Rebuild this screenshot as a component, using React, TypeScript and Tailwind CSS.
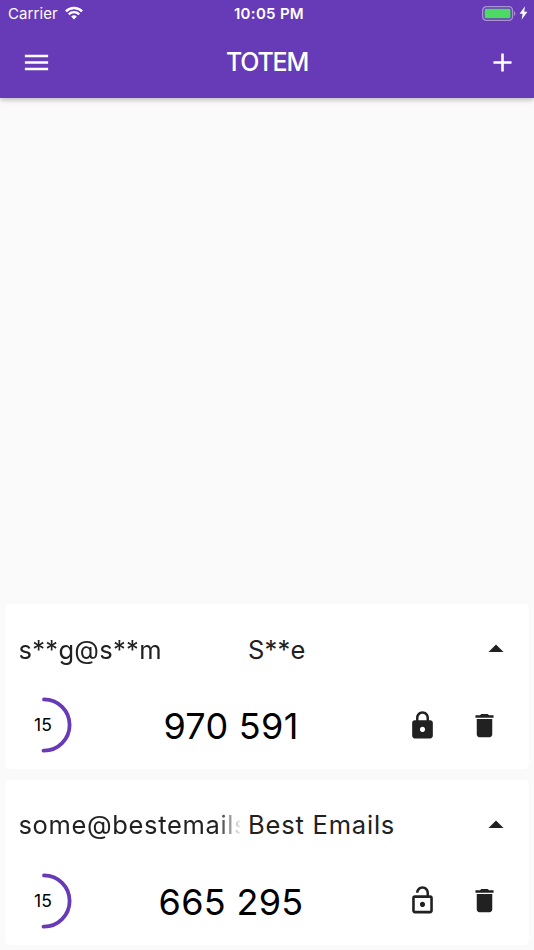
import React from 'react';
import { MdAdd, MdArrowDropUp, MdDelete, MdLock, MdLockOpen, MdMenu } from 'react-icons/md';

interface Account {
  email: string;
  issuer: string;
  code: string;
  secondsLeft: number;
  locked: boolean;
}

const PERIOD = 30;

const ACCOUNTS: Account[] = [
  { email: 's**g@s**m', issuer: 'S**e', code: '970 591', secondsLeft: 15, locked: true },
  { email: 'some@bestemails', issuer: 'Best Emails', code: '665 295', secondsLeft: 15, locked: false },
];

const StatusBar: React.FC = () => (
  <div className="grid h-[26px] grid-cols-3 items-center text-[15px] leading-[26px]">
    <div className="flex items-center gap-[7px] pl-2">
      <span className="pt-px tracking-[0.1px]">Carrier</span>
      <svg className="-mt-px" width="18" height="14" viewBox="0 0 19 14" fill="none" stroke="currentColor" strokeWidth="2.5">
        <path d="M1 5.2a12.2 12.2 0 0 1 17 0" />
        <path d="M4 8.4a7.8 7.8 0 0 1 11 0" />
        <path d="M9.5 13.8 6.5 10.8a4.3 4.3 0 0 1 6 0z" fill="currentColor" stroke="none" />
      </svg>
    </div>
    <span className="pt-px pl-[4px] text-center font-semibold tracking-[0.3px] whitespace-nowrap">10:05 PM</span>
    <div className="flex items-center justify-end gap-[3px] pr-[6px]">
      <svg className="-mt-px" width="34" height="15" viewBox="0 0 34 15" fill="none">
        <rect x="0.7" y="0.7" width="29.8" height="13.6" rx="3.6" stroke="white" strokeOpacity="0.45" strokeWidth="1.3" />
        <rect x="2.7" y="2.7" width="25.8" height="9.6" rx="1.2" fill="#4cd964" />
        <path d="M32 5.2c1.8.6 1.8 4 0 4.6z" fill="white" fillOpacity="0.45" />
      </svg>
      <svg className="-mt-px" width="9" height="14" viewBox="0 0 9 14" fill="currentColor">
        <path d="M6 .3.6 7.8h3L2.6 13.7 8.4 5.8H5.2z" />
      </svg>
    </div>
  </div>
);

const Countdown: React.FC<{ seconds: number }> = ({ seconds }) => {
  const radius = 25.6;
  const circumference = 2 * Math.PI * radius;

  return (
    <div className="-mt-px grid size-[56px] place-items-center">
      <svg className="col-start-1 row-start-1 -rotate-90" width="56" height="56" viewBox="0 0 56 56">
        <circle
          cx="28"
          cy="28"
          r={radius}
          fill="none"
          stroke="#673ab7"
          strokeWidth="3.8"
          strokeLinecap="round"
          strokeDasharray={`${(circumference * seconds) / PERIOD} ${circumference}`}
        />
      </svg>
      <span className="col-start-1 row-start-1 pt-px pr-[2px] text-[17.5px] text-black">{seconds}</span>
    </div>
  );
};

const AccountCard: React.FC<{ account: Account }> = ({ account }) => (
  <section className="h-[165px] rounded-[5px] bg-white text-[#212121]">
    {/* Account name */}
    <div className="flex h-[91px] items-center pl-[13.5px] text-[25.5px]">
      <div
        className={`w-[221.5px] overflow-hidden pt-px whitespace-nowrap [mask-image:linear-gradient(to_right,black_198px,transparent_223px)] ${account.locked ? 'tracking-[0.3px]' : 'tracking-[0.65px]'}`}
      >
        {account.email}
      </div>
      <div
        className={`flex-1 pt-px pl-[8px] whitespace-nowrap ${account.locked ? 'tracking-[0.2px]' : 'tracking-[0.8px]'}`}
      >
        {account.issuer}
      </div>
      <button className="mr-[15px] -mt-px" aria-label="Collapse">
        <MdArrowDropUp size={36} />
      </button>
    </div>

    {/* Code and actions */}
    <div className="flex h-[61px] items-center pl-[11px]">
      <Countdown seconds={account.secondsLeft} />
      <div className="flex-1 pt-px pr-[17px] text-center text-[36px] tracking-[0.3px] text-black">{account.code}</div>
      <div className="-mt-px flex gap-[31px] pr-[29px]">
        <button aria-label="Toggle lock">{account.locked ? <MdLock size={31} /> : <MdLockOpen size={31} />}</button>
        <button aria-label="Delete">
          <MdDelete size={31} />
        </button>
      </div>
    </div>
  </section>
);

export default function App() {
  return (
    <div className="flex h-[950px] w-[534px] flex-col overflow-hidden bg-[#fafafa] font-['Inter','Liberation_Sans',sans-serif]">
      <header className="h-[98px] shrink-0 bg-[#673ab7] text-white shadow-[0_2px_5px_rgba(0,0,0,0.25)]">
        <StatusBar />
        <div className="grid h-[72px] grid-cols-3 items-center">
          <button className="pl-[21px]" aria-label="Menu">
            <MdMenu size={31} />
          </button>
          <h1 className="pt-[2px] text-center text-[25px] font-medium tracking-[-1.2px]">TOTEM</h1>
          <button className="flex justify-end pr-[16px]" aria-label="Add account">
            <MdAdd size={31} />
          </button>
        </div>
      </header>

      <main className="flex flex-1 flex-col justify-end gap-[10.5px] px-[5px] pb-[5.5px]">
        {ACCOUNTS.map((account) => (
          <AccountCard key={account.email} account={account} />
        ))}
      </main>
    </div>
  );
}
